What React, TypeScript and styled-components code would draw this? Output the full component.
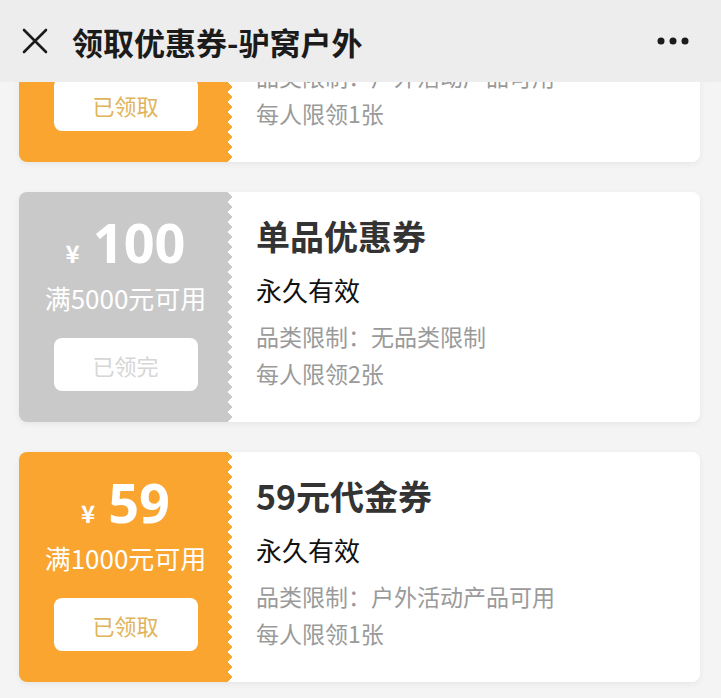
import React, { useLayoutEffect, useRef } from "react";
import styled, { createGlobalStyle } from "styled-components";

const GlobalStyle = createGlobalStyle`
  html, body {
    margin: 0;
    padding: 0;
    background: #f4f4f4;
  }
  body {
    font-family: "Noto Sans CJK SC", "Noto Sans", sans-serif;
  }
`;

type Coupon = {
  amount: string;
  condition: string;
  title: string;
  validity: string;
  category: string;
  limit: string;
  status: string;
  used: boolean;
};

const coupons: Coupon[] = [
  {
    amount: "59",
    condition: "满1000元可用",
    title: "59元代金券",
    validity: "永久有效",
    category: "品类限制：户外活动产品可用",
    limit: "每人限领1张",
    status: "已领取",
    used: false,
  },
  {
    amount: "100",
    condition: "满5000元可用",
    title: "单品优惠券",
    validity: "永久有效",
    category: "品类限制：无品类限制",
    limit: "每人限领2张",
    status: "已领完",
    used: true,
  },
  {
    amount: "59",
    condition: "满1000元可用",
    title: "59元代金券",
    validity: "永久有效",
    category: "品类限制：户外活动产品可用",
    limit: "每人限领1张",
    status: "已领取",
    used: false,
  },
];

const ORANGE = "#f9a530";
const GREY = "#c9c9c9";

const Page = styled.div`
  width: 721px;
  height: 698px;
  display: flex;
  flex-direction: column;
  overflow: hidden;
  background: #f4f4f4;
`;

const Header = styled.header`
  height: 82px;
  flex: none;
  display: flex;
  align-items: center;
  padding: 0 32px 0 22px;
  background: #ededed;
  gap: 24px;
`;

const Title = styled.h1`
  flex: 1;
  margin: 0;
  font-size: 31px;
  font-weight: 700;
  color: #1b1b1b;
`;

const IconButton = styled.span`
  display: flex;
  align-items: center;
  justify-content: center;
`;

const Scroller = styled.div`
  flex: 1;
  overflow-y: auto;
  scrollbar-width: none;
  &::-webkit-scrollbar {
    display: none;
  }
`;

const List = styled.div`
  display: flex;
  flex-direction: column;
  gap: 30px;
  padding: 30px 21px 30px 19px;
`;

const Card = styled.div`
  display: flex;
  height: 230px;
  border-radius: 8px;
  box-shadow: 0 2px 6px rgba(0, 0, 0, 0.06);
`;

const Stub = styled.div<{ $used: boolean }>`
  position: relative;
  width: 207px;
  flex: none;
  display: flex;
  flex-direction: column;
  align-items: center;
  padding-left: 6px;
  box-sizing: border-box;
  background: ${(p) => (p.$used ? GREY : ORANGE)};
  border-radius: 8px 0 0 8px;
  color: #fff;

  &::after {
    content: "";
    position: absolute;
    top: 0;
    bottom: 0;
    right: -7px;
    width: 7px;
    background: conic-gradient(
        at 100% 50%,
        transparent 0deg 230deg,
        ${(p) => (p.$used ? GREY : ORANGE)} 230deg 310deg,
        transparent 310deg
      )
      0 0 / 7px 10px repeat-y;
  }
`;

const Amount = styled.div`
  margin-top: 21px;
  display: flex;
  align-items: baseline;
  gap: 13px;
  line-height: 58px;
  height: 58px;
`;

const Yen = styled.span`
  font-size: 24px;
  font-weight: 700;
`;

const Value = styled.span`
  font-family: "Noto Sans", "Noto Sans CJK SC", sans-serif;
  font-size: 54px;
  font-weight: 700;
`;

const Condition = styled.div`
  margin-top: 12px;
  font-size: 26px;
  line-height: 30px;
`;

const Status = styled.div<{ $used: boolean }>`
  margin-top: 25px;
  width: 144px;
  height: 53px;
  border-radius: 8px;
  background: #fff;
  display: flex;
  align-items: center;
  justify-content: center;
  font-size: 22px;
  color: ${(p) => (p.$used ? "#d6d6d6" : "#e0b45a")};
`;

const Body = styled.div`
  flex: 1;
  background: #fff;
  border-radius: 0 8px 8px 0;
  padding: 24px 0 0 30px;
  display: flex;
  flex-direction: column;
`;

const CouponTitle = styled.div`
  font-size: 34px;
  font-weight: 700;
  line-height: 40px;
  color: #333;
`;

const Validity = styled.div`
  margin-top: 17px;
  font-size: 26px;
  line-height: 34px;
  color: #111;
`;

const Info = styled.div<{ $gap: number }>`
  margin-top: ${(p) => p.$gap}px;
  font-size: 23px;
  line-height: 30px;
  color: #9a9a9a;
`;

function CloseIcon() {
  return (
    <svg width="26" height="26" viewBox="0 0 26 26">
      <path d="M2 2 L24 24 M24 2 L2 24" stroke="#1b1b1b" strokeWidth="2.6" strokeLinecap="round" />
    </svg>
  );
}

function MoreIcon() {
  return (
    <svg width="32" height="8" viewBox="0 0 32 8">
      <circle cx="4" cy="4" r="3.5" fill="#1b1b1b" />
      <circle cx="16" cy="4" r="3.5" fill="#1b1b1b" />
      <circle cx="28" cy="4" r="3.5" fill="#1b1b1b" />
    </svg>
  );
}

function CouponCard({ c }: { c: Coupon }) {
  return (
    <Card>
      <Stub $used={c.used}>
        <Amount>
          <Yen>¥</Yen>
          <Value>{c.amount}</Value>
        </Amount>
        <Condition>{c.condition}</Condition>
        <Status $used={c.used}>{c.status}</Status>
      </Stub>
      <Body>
        <CouponTitle>{c.title}</CouponTitle>
        <Validity>{c.validity}</Validity>
        <Info $gap={14}>{c.category}</Info>
        <Info $gap={7}>{c.limit}</Info>
      </Body>
    </Card>
  );
}

export default function App() {
  const scrollRef = useRef<HTMLDivElement>(null);

  // list is already scrolled down a bit in the screenshot
  useLayoutEffect(() => {
    if (scrollRef.current) scrollRef.current.scrollTop = 180;
  }, []);

  return (
    <Page>
      <GlobalStyle />
      <Header>
        <IconButton>
          <CloseIcon />
        </IconButton>
        <Title>领取优惠券-驴窝户外</Title>
        <IconButton>
          <MoreIcon />
        </IconButton>
      </Header>
      <Scroller ref={scrollRef}>
        <List>
          {coupons.map((c, i) => (
            <CouponCard key={i} c={c} />
          ))}
        </List>
      </Scroller>
    </Page>
  );
}
